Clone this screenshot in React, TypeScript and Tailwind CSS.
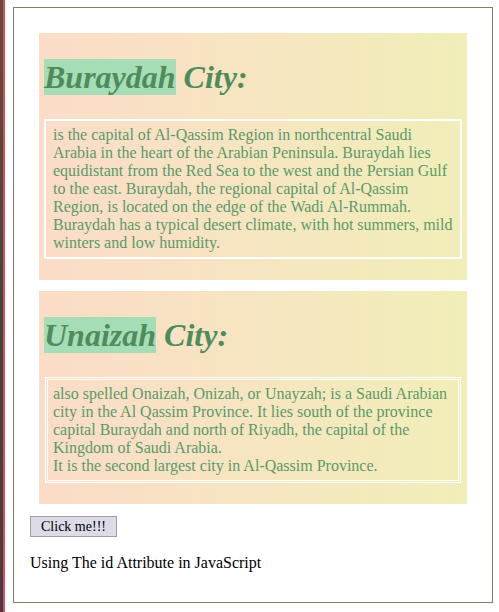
import React from "react";

const serif = { fontFamily: '"Liberation Serif", "Times New Roman", serif' };

export default function App() {
  return (
    <div className="flex h-[612px] w-[499px] bg-white overflow-hidden" style={serif}>
      <div className="w-[3px] h-full bg-linear-to-b from-[#6a4a3a] via-[#3a4a3a] to-[#4a3a40]" />
      <div className="w-[2px] h-full bg-[#e2485e]" />
      <div className="flex-1 pl-[8px] pt-[7px]">
        <div className="w-[480px] h-[596px] border border-[#847e5e] px-[16px] pt-[25px]">
          <section className="mx-[9px] bg-linear-to-r from-[#fbdcc8] to-[#f1eeb8] pt-[27px] pb-[21px]">
            <h2 className="pl-[5px] text-[32px] leading-[35px] font-bold italic text-[#4e8c5c]">
              <span className="bg-[#a6dcb6]">Buraydah</span> City:
            </h2>
            <p className="mx-[5px] mt-[24px] border-2 border-white px-[7px] py-[5px] text-[16px] leading-[18px] text-[#5a9a6a]">
              is the capital of Al-Qassim Region in northcentral Saudi Arabia in the heart of the Arabian Peninsula. Buraydah lies equidistant from the Red Sea to the west and the Persian Gulf to the east. Buraydah, the regional capital of Al-Qassim Region, is located on the edge of the Wadi Al-Rummah. Buraydah has a typical desert climate, with hot summers, mild winters and low humidity.
            </p>
          </section>
          <section className="mx-[9px] mt-[11px] bg-linear-to-r from-[#fbdcc8] to-[#f1eeb8] pt-[27px] pb-[21px]">
            <h2 className="pl-[5px] text-[32px] leading-[35px] font-bold italic text-[#4e8c5c]">
              <span className="bg-[#a6dcb6]">Unaizah</span> City:
            </h2>
            <p className="ml-[6px] mr-[6px] mt-[24px] border-[3px] border-double border-white px-[5px] py-[5px] text-[16px] leading-[18px] text-[#5a9a6a]">
              also spelled Onaizah, Onizah, or Unayzah; is a Saudi Arabian city in the Al Qassim Province. It lies south of the province capital Buraydah and north of Riyadh, the capital of the Kingdom of Saudi Arabia.
              <br />
              It is the second largest city in Al-Qassim Province.
            </p>
          </section>
          <button className="mt-[12px] block h-[21px] w-[87px] border border-[#a0a0a0] bg-[#dcdce8] text-[14px] leading-[19px] text-black">
            Click me!!!
          </button>
          <div className="mt-[17px] text-[16px] leading-[18px] text-black">Using The id Attribute in JavaScript</div>
        </div>
      </div>
    </div>
  );
}
